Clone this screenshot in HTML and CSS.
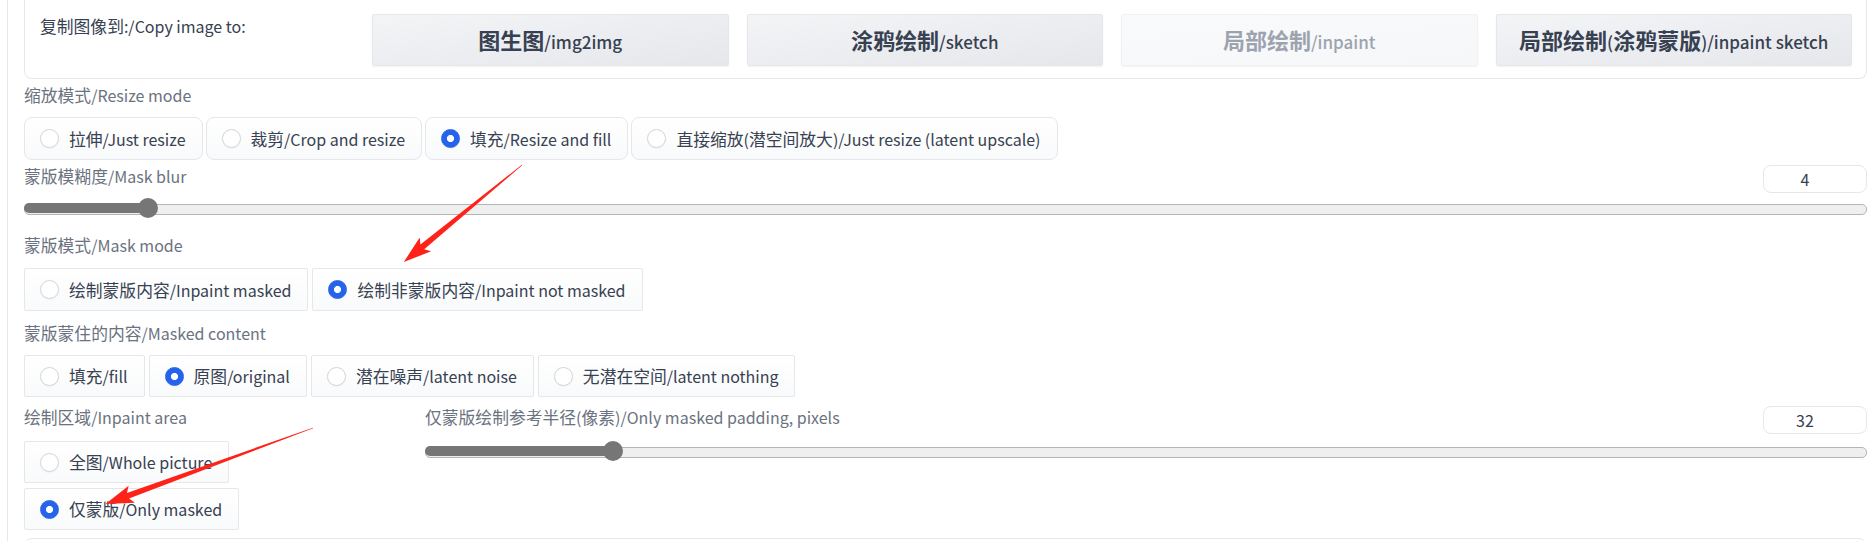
FILE: index.html
```html
<!DOCTYPE html>
<html lang="zh">
<head>
<meta charset="utf-8">
<link rel="stylesheet" href="styles.css">
</head>
<body>
<div class="page">
  <div class="copy-card">
    <div class="copy-label"><span class="zh">复制图像到</span>:/Copy image to:</div>
    <button class="btn"><span class="zh">图生图</span>/img2img</button>
    <button class="btn"><span class="zh">涂鸦绘制</span>/sketch</button>
    <button class="btn btn-off"><span class="zh">局部绘制</span>/inpaint</button>
    <button class="btn"><span class="zh">局部绘制</span>(<span class="zh">涂鸦蒙版</span>)/inpaint sketch</button>
  </div>

  <div class="block b-resize">
    <div class="label"><span class="zh">缩放模式</span>/Resize mode</div>
    <div class="radios round">
      <label class="radio"><span class="dot"></span><span class="zh">拉伸</span>/Just resize</label>
      <label class="radio"><span class="dot"></span><span class="zh">裁剪</span>/Crop and resize</label>
      <label class="radio"><span class="dot on"></span><span class="zh">填充</span>/Resize and fill</label>
      <label class="radio"><span class="dot"></span><span class="zh">直接缩放</span>(<span class="zh">潜空间放大</span>)/Just resize (latent upscale)</label>
    </div>
  </div>

  <div class="block b-blur">
    <div class="head">
      <span class="label"><span class="zh">蒙版模糊度</span>/Mask blur</span>
      <div class="num">4</div>
    </div>
    <div class="slider">
      <div class="fill" style="width: calc(10px + (100% - 20px) * 0.0625)"></div>
      <div class="thumb" style="left: calc(10px + (100% - 20px) * 0.0625)"></div>
    </div>
  </div>

  <div class="block b-mode">
    <div class="label"><span class="zh">蒙版模式</span>/Mask mode</div>
    <div class="radios">
      <label class="radio"><span class="dot"></span><span class="zh">绘制蒙版内容</span>/Inpaint masked</label>
      <label class="radio"><span class="dot on"></span><span class="zh">绘制非蒙版内容</span>/Inpaint not masked</label>
    </div>
  </div>

  <div class="block b-content">
    <div class="label"><span class="zh">蒙版蒙住的内容</span>/Masked content</div>
    <div class="radios">
      <label class="radio"><span class="dot"></span><span class="zh">填充</span>/fill</label>
      <label class="radio"><span class="dot on"></span><span class="zh">原图</span>/original</label>
      <label class="radio"><span class="dot"></span><span class="zh">潜在噪声</span>/latent noise</label>
      <label class="radio"><span class="dot"></span><span class="zh">无潜在空间</span>/latent nothing</label>
    </div>
  </div>

  <div class="area">
    <div class="area-left">
      <div class="label"><span class="zh">绘制区域</span>/Inpaint area</div>
      <div class="radios wrap">
        <label class="radio"><span class="dot"></span><span class="zh">全图</span>/Whole picture</label>
        <label class="radio"><span class="dot on"></span><span class="zh">仅蒙版</span>/Only masked</label>
      </div>
    </div>
    <div class="area-right">
      <div class="head">
        <span class="label"><span class="zh">仅蒙版绘制参考半径</span>(<span class="zh">像素</span>)/Only masked padding, pixels</span>
        <div class="num">32</div>
      </div>
      <div class="slider s2">
        <div class="fill" style="width: calc(10px + (100% - 20px) * 0.125)"></div>
        <div class="thumb" style="left: calc(10px + (100% - 20px) * 0.125)"></div>
      </div>
    </div>
  </div>

  <div class="next-card"></div>

  <svg class="arrows" width="1875" height="541" viewBox="0 0 1875 541">
    <polygon fill="#ff2218" transform="translate(522 165) rotate(140.6)"
      points="0,-0.3 129,-3 125,-9 153,0 125,9 129,3 0,0.3"/>
    <polygon fill="#ff2218" transform="translate(313 428) rotate(159.9)"
      points="0,-0.3 197,-3 193,-9 221,0 193,9 197,3 0,0.3"/>
  </svg>
</div>
</body>
</html>
```

FILE: styles.css
```css
* { box-sizing: border-box; }

body {
  margin: 0;
  background: #fff;
  font-family: "Noto Sans CJK SC", "Noto Sans", sans-serif;
  color: #374151;
}

.page {
  position: relative;
  height: 541px;
  overflow: hidden;
  margin-left: 7px;
  border-left: 1px solid #e5e7eb;
  padding: 0 8px 0 16px;
}

.zh { font-size: 16.8px; }

/* top card */
.copy-card {
  display: flex;
  align-items: flex-start;
  gap: 18px;
  border: 1px solid #e5e7eb;
  border-top: 0;
  border-radius: 0 0 8px 8px;
  padding: 14px 14px 12px 15px;
}

.copy-label {
  flex: 0 0 314px;
  padding-top: 1px;
  font-size: 16px;
  line-height: 22px;
  color: #374151;
}

.btn {
  flex: 1 1 0;
  height: 52px;
  border: 1px solid #e5e7eb;
  border-radius: 2px;
  background: linear-gradient(to bottom right, #f3f4f6, #e5e7eb);
  font-family: inherit;
  font-size: 17px;
  font-weight: 500;
  line-height: 24px;
  color: #374151;
  box-shadow: 0 1px 2px rgba(0, 0, 0, 0.05);
}

.btn .zh {
  font-size: 22px;
  font-weight: 700;
}

.btn-off {
  background: linear-gradient(to bottom right, #f9fafb, #f6f7f8);
  border-color: #f0f1f3;
  color: #9ca3af;
}

/* blocks */
.label {
  display: block;
  font-size: 16px;
  line-height: 22px;
  color: #6b7280;
}

.b-resize { margin-top: 5px; }
.b-blur { margin-top: 5px; }
.b-mode { margin-top: 16px; }
.b-content { margin-top: 11px; }

.b-resize .radios { margin-top: 11px; }
.b-mode .radios { margin-top: 12px; }
.b-content .radios { margin-top: 11px; }

.radios {
  display: flex;
  gap: 4px;
}

.radios.wrap {
  flex-wrap: wrap;
  row-gap: 5px;
  margin-top: 13px;
}

.radio {
  display: flex;
  align-items: center;
  height: 42px;
  padding: 0 16px 0 15px;
  border: 1px solid #e5e7eb;
  border-radius: 2px;
  background: linear-gradient(to bottom, #ffffff, #f9fafb);
  font-size: 16px;
  color: #374151;
  white-space: nowrap;
}

.b-resize .radio, .b-mode .radio { height: 43px; }
.round { gap: 3px; }
.round .radio { border-radius: 8px; }

.dot {
  flex: 0 0 19px;
  width: 19px;
  height: 19px;
  margin-right: 10px;
  border-radius: 50%;
  border: 1px solid #d1d5db;
  background: #fff;
  box-shadow: 0 1px 2px rgba(0, 0, 0, 0.04);
}

.dot.on {
  border-color: #2563eb;
  background: radial-gradient(circle, #fff 0 3.2px, #2563eb 3.9px);
}

/* number + slider */
.head {
  display: flex;
  justify-content: space-between;
  align-items: flex-start;
}

.num {
  width: 104px;
  height: 28px;
  border: 1px solid #e5e7eb;
  border-radius: 8px;
  padding-right: 20px;
  text-align: center;
  font-size: 16px;
  line-height: 26px;
  color: #374151;
}

.slider {
  position: relative;
  height: 20px;
  margin-top: 5px;
}

.slider::before {
  content: "";
  position: absolute;
  left: 0;
  right: 0;
  top: 5.5px;
  height: 9px;
  border: 1px solid #b5b5b5;
  border-radius: 5px;
  background: #efefef;
}

.fill {
  position: absolute;
  left: 0;
  top: 5px;
  height: 10px;
  border-radius: 5px 0 0 5px;
  background: #767676;
}

.thumb {
  position: absolute;
  top: 0;
  width: 20px;
  height: 20px;
  margin-left: -10px;
  border-radius: 50%;
  background: #767676;
}

/* inpaint area row */
.area {
  display: flex;
  gap: 16px;
  margin-top: 9px;
}

.area-left { flex: 0 0 385px; }
.area-right { flex: 1 1 0; }
.area-right .slider { margin-top: 7px; }

.next-card {
  margin-top: 8px;
  height: 40px;
  border: 1px solid #e5e7eb;
  border-radius: 8px;
}

.arrows {
  position: absolute;
  left: -8px;
  top: 0;
  pointer-events: none;
}
```
